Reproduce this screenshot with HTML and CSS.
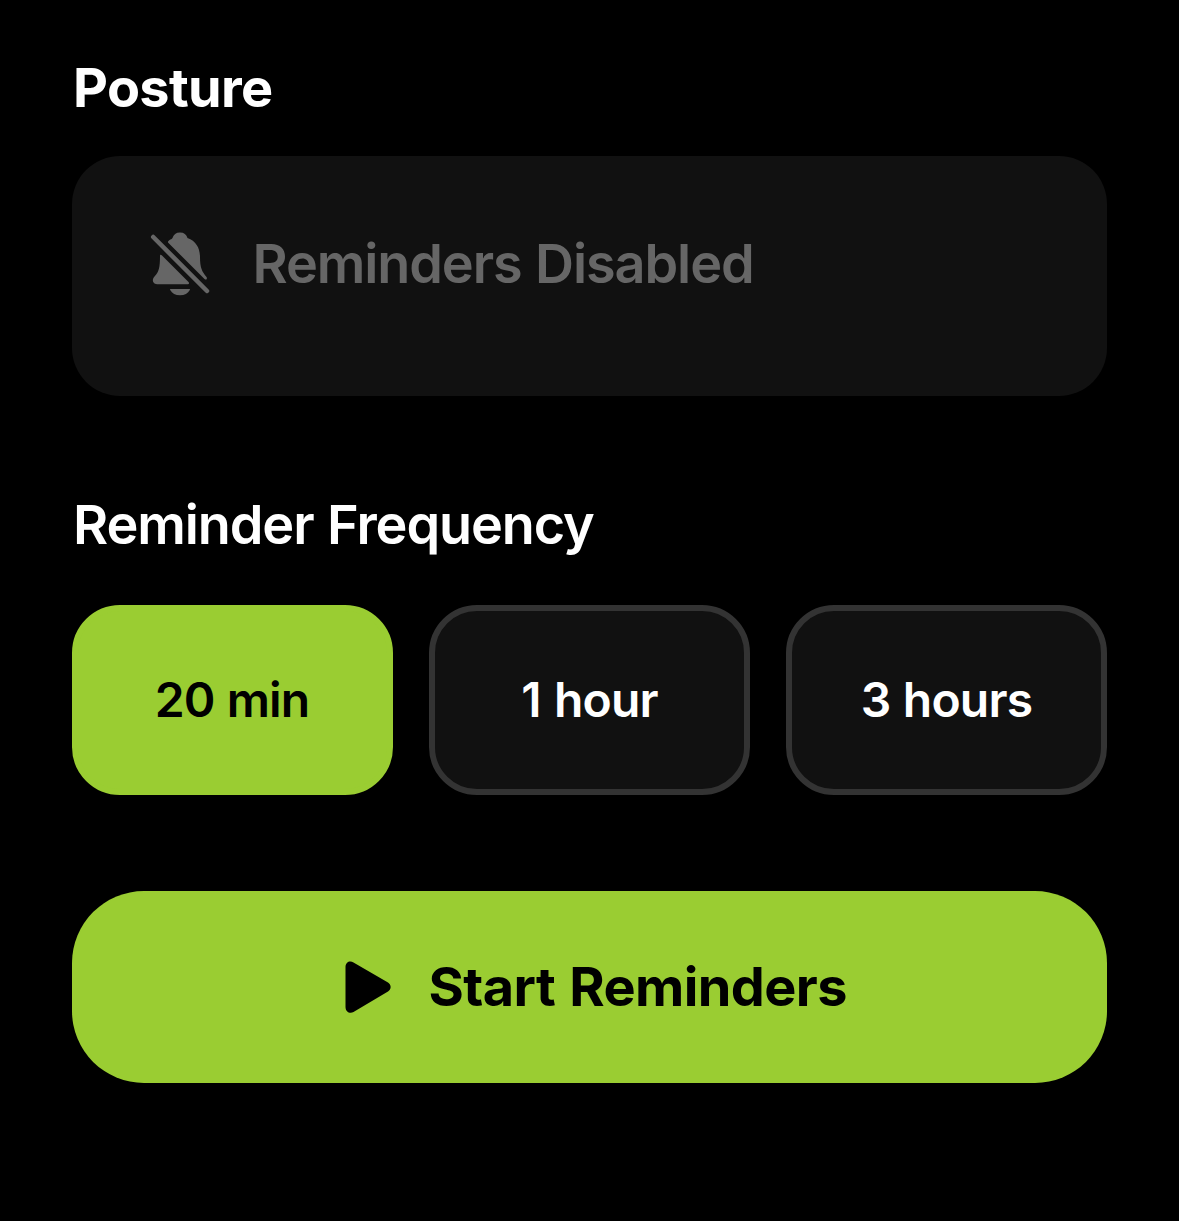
FILE: index.html
```html
<!DOCTYPE html>
<html lang="en">
<head>
<meta charset="utf-8">
<title>Posture</title>
<link rel="stylesheet" href="styles.css">
</head>
<body>
<main class="screen">
  <h1 class="title">Posture</h1>
  <section class="status">
    <svg class="bell" viewBox="0 0 80 85" aria-hidden="true">
      <path d="M28 21.500C29.500 19.500 31.500 19.500 32.500 18C33.500 14.500 36 12.500 40 12.500S46.500 14.500 47.500 18C56 21 60 28 60 37C60 48 62 51.500 66.500 57C67.500 58.500 66.500 60.500 64.500 59L28 22.500Z"/>
      <path d="M20 36C20 34.500 21 34.500 22 35.500L48.500 62C49.500 63 49 64.300 48 64.300H17.500C12.500 64.300 11.500 59.500 14.500 56.500C19 52 20 47 20 36Z"/>
      <path d="M30.500 69H49.500C50 69 50 69.500 49.800 70C48 73.500 44.500 75.300 40 75.300S32 73.500 30.200 70C30 69.500 30 69 30.500 69Z"/>
      <path class="slash" d="M13.200 17L67 71"/>
    </svg>
    <span class="status-label">Reminders Disabled</span>
  </section>
  <h2 class="subtitle">Reminder Frequency</h2>
  <div class="options">
    <button class="option selected">20 min</button>
    <button class="option hour">1 hour</button>
    <button class="option">3 hours</button>
  </div>
  <button class="start">
    <svg class="play" viewBox="0 0 46 52" aria-hidden="true"><path d="M0.500 6C0.500 1 5 -1 8.500 1.500L43 21.500C46.500 24 46.500 28 43 30.500L8.500 51C5 53 0.500 51 0.500 46Z"/></svg>
    <span class="start-label">Start Reminders</span>
  </button>
</main>
</body>
</html>
```
FILE: styles.css
```css
* { box-sizing: border-box; }
body { margin: 0; background: #000; color: #fff; font-family: Inter, "Liberation Sans", sans-serif; }
.screen { height: 1221px; padding: 56px 72px 0; }
h1, h2 { margin: 0; white-space: nowrap; }
.title { height: 64px; padding-left: 1px; font-size: 54px; line-height: 64px; font-weight: 700; letter-spacing: -0.65px; }
.status { display: flex; align-items: flex-start; height: 240px; margin-top: 36px; padding: 64px 68px; border-radius: 48px; background: #111; color: #666; }
.bell { flex: none; width: 80px; height: 85px; fill: currentColor; }
.slash { fill: none; stroke: currentColor; stroke-width: 4.5; stroke-linecap: round; }
.status-label { margin-left: 32.5px; padding-top: 12px; font-size: 54px; line-height: 64px; font-weight: 580; letter-spacing: -1.1px; word-spacing: 1px; white-space: nowrap; }
.subtitle { height: 64px; margin-top: 97px; padding-left: 1px; font-size: 54px; line-height: 64px; font-weight: 580; letter-spacing: -1.1px; word-spacing: 1px; }
.options { display: grid; grid-template-columns: repeat(3, 1fr); gap: 36px; margin-top: 48px; }
button { font-family: inherit; margin: 0; padding: 0; }
.option { height: 190px; padding-bottom: 2px; border: 6px solid #333; border-radius: 48px; background: #111; color: #fff; font-size: 48px; font-weight: 580; letter-spacing: -0.8px; word-spacing: 1px; white-space: nowrap; }
.option.selected { padding-right: 1px; background: #9acd32; border-color: #9acd32; color: #000; font-weight: 560; letter-spacing: -0.9px; }
.option.hour { word-spacing: 2px; }
.start { display: flex; align-items: center; width: 100%; height: 192px; margin-top: 96px; padding-left: 273px; border: 0; border-radius: 72px; background: #9acd32; color: #000; }
.play { flex: none; width: 46px; height: 52px; }
.start-label { margin-left: 37.5px; font-size: 54px; line-height: 64px; font-weight: 700; letter-spacing: -0.6px; word-spacing: 2px; white-space: nowrap; }
```
